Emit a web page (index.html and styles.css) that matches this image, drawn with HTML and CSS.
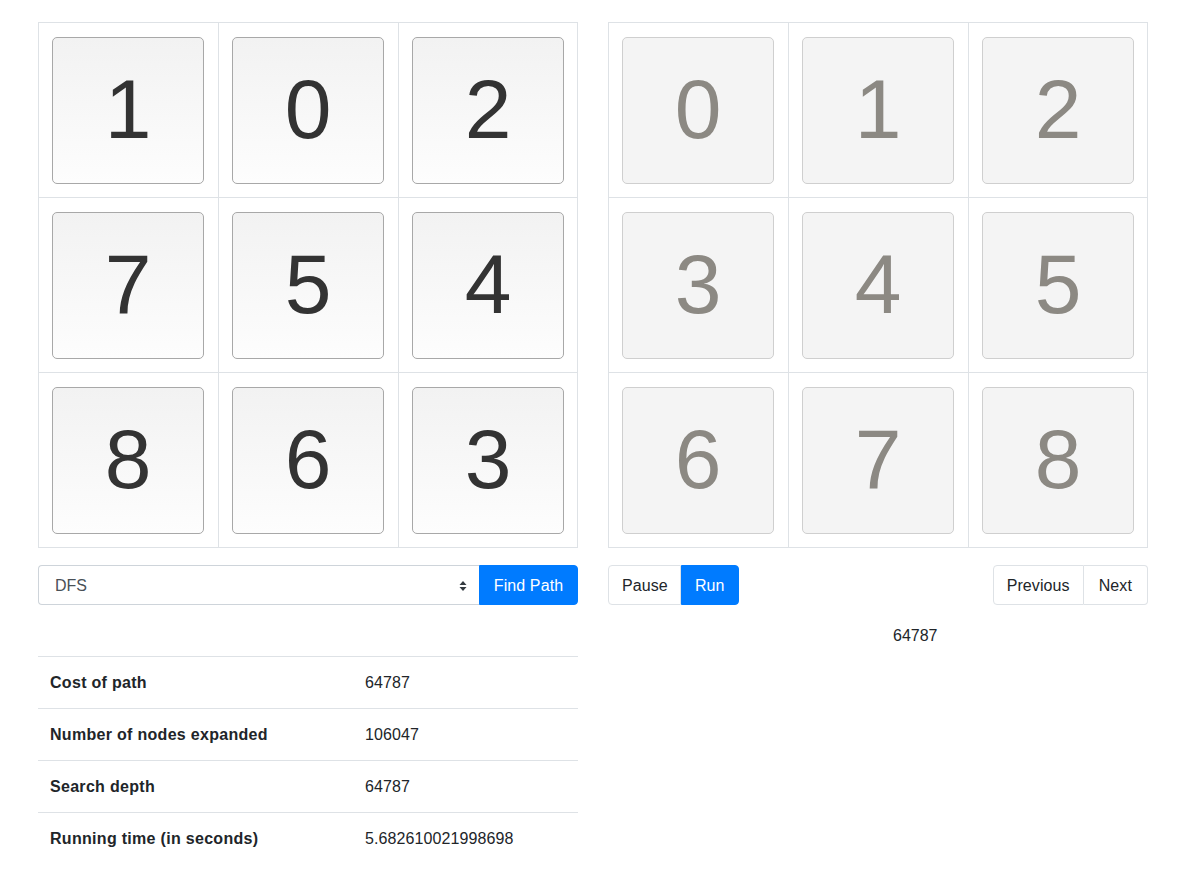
FILE: index.html
```html
<!DOCTYPE html>
<html>
<head>
<meta charset="utf-8">
<link rel="stylesheet" href="styles.css">
</head>
<body>
<div class="page">
  <div class="col">
    <div class="board">
      <div class="cell"><div class="tile">1</div></div>
      <div class="cell"><div class="tile">0</div></div>
      <div class="cell"><div class="tile">2</div></div>
      <div class="cell"><div class="tile">7</div></div>
      <div class="cell"><div class="tile">5</div></div>
      <div class="cell"><div class="tile">4</div></div>
      <div class="cell"><div class="tile">8</div></div>
      <div class="cell"><div class="tile">6</div></div>
      <div class="cell"><div class="tile">3</div></div>
    </div>
    <div class="controls">
      <div class="input-group">
        <div class="select">
          <span>DFS</span>
          <svg class="caret" width="8" height="12" viewBox="0 0 8 12"><path d="M4 1 L7.5 5 H0.5 Z M4 11 L7.5 7 H0.5 Z" fill="#343a40"/></svg>
        </div>
        <button class="btn btn-primary btn-attached">Find Path</button>
      </div>
    </div>
    <table class="stats">
      <tr><th>Cost of path</th><td>64787</td></tr>
      <tr><th>Number of nodes expanded</th><td>106047</td></tr>
      <tr><th>Search depth</th><td>64787</td></tr>
      <tr><th>Running time (in seconds)</th><td>5.682610021998698</td></tr>
    </table>
  </div>
  <div class="col">
    <div class="board goal">
      <div class="cell"><div class="tile">0</div></div>
      <div class="cell"><div class="tile">1</div></div>
      <div class="cell"><div class="tile">2</div></div>
      <div class="cell"><div class="tile">3</div></div>
      <div class="cell"><div class="tile">4</div></div>
      <div class="cell"><div class="tile">5</div></div>
      <div class="cell"><div class="tile">6</div></div>
      <div class="cell"><div class="tile">7</div></div>
      <div class="cell"><div class="tile">8</div></div>
    </div>
    <div class="controls split">
      <div class="btn-group">
        <button class="btn btn-light btn-pause">Pause</button>
        <button class="btn btn-primary">Run</button>
      </div>
      <div class="btn-group">
        <button class="btn btn-light">Previous</button>
        <button class="btn btn-light btn-next">Next</button>
      </div>
    </div>
    <div class="step">64787</div>
  </div>
</div>
</body>
</html>
```

FILE: styles.css
```css
* { box-sizing: border-box; }
html, body { margin: 0; padding: 0; background: #fff; }
body {
  font-family: "Liberation Sans", Arial, sans-serif;
  font-size: 16px;
  color: #212529;
}
.page {
  display: flex;
  gap: 30px;
  padding: 22px 0 0 38px;
}
.col { width: 540px; }
.board {
  display: grid;
  grid-template-columns: 180px 180px 179px;
  grid-template-rows: repeat(3, 175px);
  border-right: 1px solid #dee2e6;
  border-bottom: 1px solid #dee2e6;
  width: 540px;
}
.cell {
  border-top: 1px solid #dee2e6;
  border-left: 1px solid #dee2e6;
  padding: 14px 14px 13px 13px;
}
.cell:nth-child(3n) { padding-right: 13px; }
.tile {
  width: 152px;
  height: 147px;
  border: 1px solid #a8a8a8;
  border-radius: 5px;
  background: linear-gradient(#f2f2f2, #fdfdfd);
  display: flex;
  align-items: center;
  justify-content: center;
  font-family: "Liberation Sans", Arial, sans-serif;
  font-size: 84px;
  color: #333;
  padding-bottom: 2px;
}
.goal .tile {
  background: #f4f4f4;
  border-color: #cfcfcf;
  color: #8c8983;
}
.controls {
  margin-top: 17px;
  height: 40px;
  display: flex;
}
.controls.split { justify-content: space-between; }
.input-group { display: flex; width: 540px; }
.select {
  flex: 1;
  height: 40px;
  border: 1px solid #ced4da;
  border-right: none;
  border-radius: 4px 0 0 4px;
  display: flex;
  align-items: center;
  justify-content: space-between;
  padding: 1px 12px 0 16px;
  color: #495057;
}
.btn {
  font-family: "Liberation Sans", Arial, sans-serif;
  font-size: 16px;
  height: 40px;
  padding: 1px 13px 0;
  border: 1px solid transparent;
  background: none;
  cursor: pointer;
  line-height: 37px;
  letter-spacing: 0.1px;
}
.btn-pause { padding: 1px 12px 0 13px; }
.btn-next { padding: 1px 15px 0; }
.btn-primary { background: #007bff; border-color: #007bff; color: #fff; }
.btn-attached { border-radius: 0 4px 4px 0; width: 99px; padding: 1px 0 0; }
.btn-group { display: flex; }
.btn-light {
  background: #fff;
  color: #212529;
  border-color: #dee2e6;
}
.btn-group .btn { border-radius: 0; }
.btn-group .btn:first-child { border-radius: 4px 0 0 4px; }
.btn-group .btn:last-child { border-radius: 0 4px 4px 0; }
.btn-group .btn-light + .btn-light { border-left: none; }
.step {
  margin-top: 21px;
  padding-left: 285px;
  line-height: 20px;
}
.stats {
  margin-top: 51px;
  width: 540px;
  border-collapse: collapse;
}
.stats th, .stats td {
  border-top: 1px solid #dee2e6;
  height: 52px;
  padding: 0 12px;
  text-align: left;
  vertical-align: middle;
  letter-spacing: 0.1px;
}
.stats th { width: 315px; font-weight: bold; letter-spacing: 0.3px; }
```
